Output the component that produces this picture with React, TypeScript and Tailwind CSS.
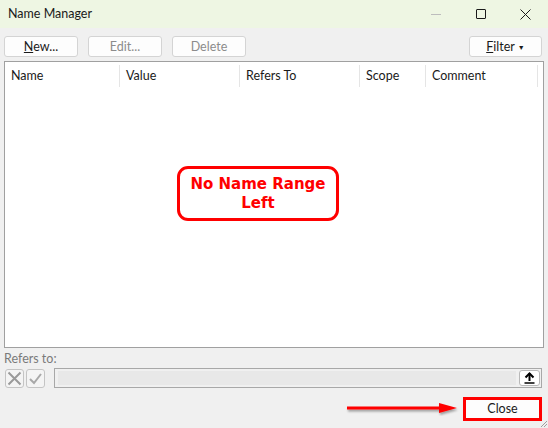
import React from "react";

const ui = { fontFamily: 'Lato, "Noto Sans", Arial, sans-serif' };

function Btn({ children, disabled, className = "" }: { children: React.ReactNode; disabled?: boolean; className?: string }) {
  return (
    <div
      className={`h-[21px] pt-[1px] flex items-center justify-center rounded-[3px] border border-[#d4d4d4] bg-[#fdfdfd] text-[12.5px] ${disabled ? "text-[#8c8c8c]" : "text-[#1a1a1a]"} ${className}`}
    >
      {children}
    </div>
  );
}

export default function App() {
  return (
    <div className="w-[548px] h-[428px] bg-[#f0f0f0] flex flex-col relative overflow-hidden" style={ui}>
      {/* title bar */}
      <div className="h-[28px] bg-[#eef6e3] flex items-center pl-[8px] shrink-0">
        <span className="text-[12.5px] text-[#1a1a1a] flex-1">Name Manager</span>
        <div className="flex items-center h-full">
          <div className="w-[45px] h-full flex items-center justify-center">
            <div className="w-[10px] h-px bg-[#bdbdbd]" />
          </div>
          <div className="w-[45px] h-full flex items-center justify-center">
            <div className="w-[10px] h-[10px] border border-[#1a1a1a] rounded-[1px]" />
          </div>
          <div className="w-[45px] h-full flex items-center justify-center">
            <svg width="11" height="11" viewBox="0 0 11 11">
              <path d="M0.5 0.5 L10.5 10.5 M10.5 0.5 L0.5 10.5" stroke="#1a1a1a" strokeWidth="1" />
            </svg>
          </div>
        </div>
      </div>

      {/* toolbar */}
      <div className="flex items-center pl-[4px] pr-[6px] pt-[8px] h-[29px]">
        <Btn className="w-[74px]">
          <span><span className="underline">N</span>ew...</span>
        </Btn>
        <Btn disabled className="w-[74px] ml-[10px]">Edit...</Btn>
        <Btn disabled className="w-[74px] ml-[10px]">Delete</Btn>
        <div className="flex-1" />
        <Btn className="w-[73px]">
          <span><span className="underline">F</span>ilter</span>
          <span className="ml-[3px] text-[7px] leading-none">▼</span>
        </Btn>
      </div>

      {/* list */}
      <div className="mx-[4px] mt-[4px] h-[287px] border border-[#a0a0a0] bg-white flex flex-col">
        <div className="h-[25px] pt-[3px] flex text-[12.5px] text-[#1a1a1a]">
          <div className="w-[115px] border-r border-[#e5e5e5] pl-[6px] flex items-center">Name</div>
          <div className="w-[120px] border-r border-[#e5e5e5] pl-[6px] flex items-center">Value</div>
          <div className="w-[120px] border-r border-[#e5e5e5] pl-[6px] flex items-center">Refers To</div>
          <div className="w-[66px] border-r border-[#e5e5e5] pl-[6px] flex items-center">Scope</div>
          <div className="w-[112px] border-r border-[#e5e5e5] pl-[6px] flex items-center">Comment</div>
        </div>
        <div className="flex-1 flex justify-center pt-[79px]">
          <div
            className="w-[162px] h-[55px] ml-[-32px] rounded-[11px] border-[3px] border-[#ff0000] flex flex-col items-center justify-center text-[#ff0000] font-bold text-[15px] leading-[19px]"
            style={{ fontFamily: '"DejaVu Sans", Verdana, sans-serif' }}
          >
            <span>No Name Range</span>
            <span>Left</span>
          </div>
        </div>
      </div>

      {/* refers to */}
      <div className="pl-[4px] mt-[3px] text-[12.5px] text-[#7a7a7a] h-[16px] leading-[16px]">Refers to:</div>
      <div className="flex items-center pl-[5px] pr-[6px] mt-[1px] h-[20px]">
        <div className="w-[19px] h-[19px] border border-[#c4c4c4] rounded-[3px] bg-[#f4f4f4] flex items-center justify-center">
          <svg width="15" height="15" viewBox="0 0 15 15">
            <path d="M1.5 1.5 L13.5 13.5 M13.5 1.5 L1.5 13.5" stroke="#9a9a9a" strokeWidth="2" />
          </svg>
        </div>
        <div className="w-[19px] h-[19px] ml-[2px] border border-[#c4c4c4] rounded-[3px] bg-[#f4f4f4] flex items-center justify-center">
          <svg width="15" height="15" viewBox="0 0 15 15">
            <path d="M2 8 L6 12 L13 3" stroke="#a8a8a8" strokeWidth="2" fill="none" />
          </svg>
        </div>
        <div className="flex-1 ml-[9px] h-[20px] border border-[#a8a8a8] bg-[#f0f0f0] flex items-stretch p-[2px] pl-[3px]">
          <div className="flex-1 bg-[#e8e8e8]" />
          <div className="w-[21px] ml-[3px] -my-[1px] -mr-[1px] border border-[#b8b8b8] rounded-[3px] bg-white flex items-center justify-center">
            <svg width="11" height="12" viewBox="0 0 11 12">
              <path d="M5.5 1 L5.5 9" stroke="#000" strokeWidth="2" />
              <path d="M1.5 5.5 L5.5 1.5 L9.5 5.5" stroke="#000" strokeWidth="2" fill="none" />
              <path d="M0.5 11 L10.5 11" stroke="#000" strokeWidth="1.5" />
            </svg>
          </div>
        </div>
      </div>

      {/* footer */}
      <div className="flex items-center justify-end pr-[6px] mt-[9px] h-[24px]">
        <svg width="116" height="14" viewBox="0 0 116 14" className="mr-[2px]">
          <defs>
            <filter id="sh" x="-10%" y="-50%" width="120%" height="200%">
              <feDropShadow dx="1" dy="2" stdDeviation="1" floodColor="#000" floodOpacity="0.35" />
            </filter>
          </defs>
          <g filter="url(#sh)">
            <path d="M2 6 L96 6" stroke="#ff0000" strokeWidth="3" />
            <path d="M94 1 L112 6 L94 11 Z" fill="#ff0000" />
          </g>
        </svg>
        <div className="w-[79px] h-[24px] pt-[1px] border-[3px] border-[#ff0000] bg-[#fdfdfd] flex items-center justify-center text-[12.5px] text-[#1a1a1a]">
          Close
        </div>
      </div>

      {/* resize grip */}
      <svg width="8" height="8" viewBox="0 0 8 8" className="absolute right-0 bottom-0">
        <path d="M7 1 L1 7 M7 4 L4 7" stroke="#a0a0a0" strokeWidth="1" />
      </svg>
    </div>
  );
}
